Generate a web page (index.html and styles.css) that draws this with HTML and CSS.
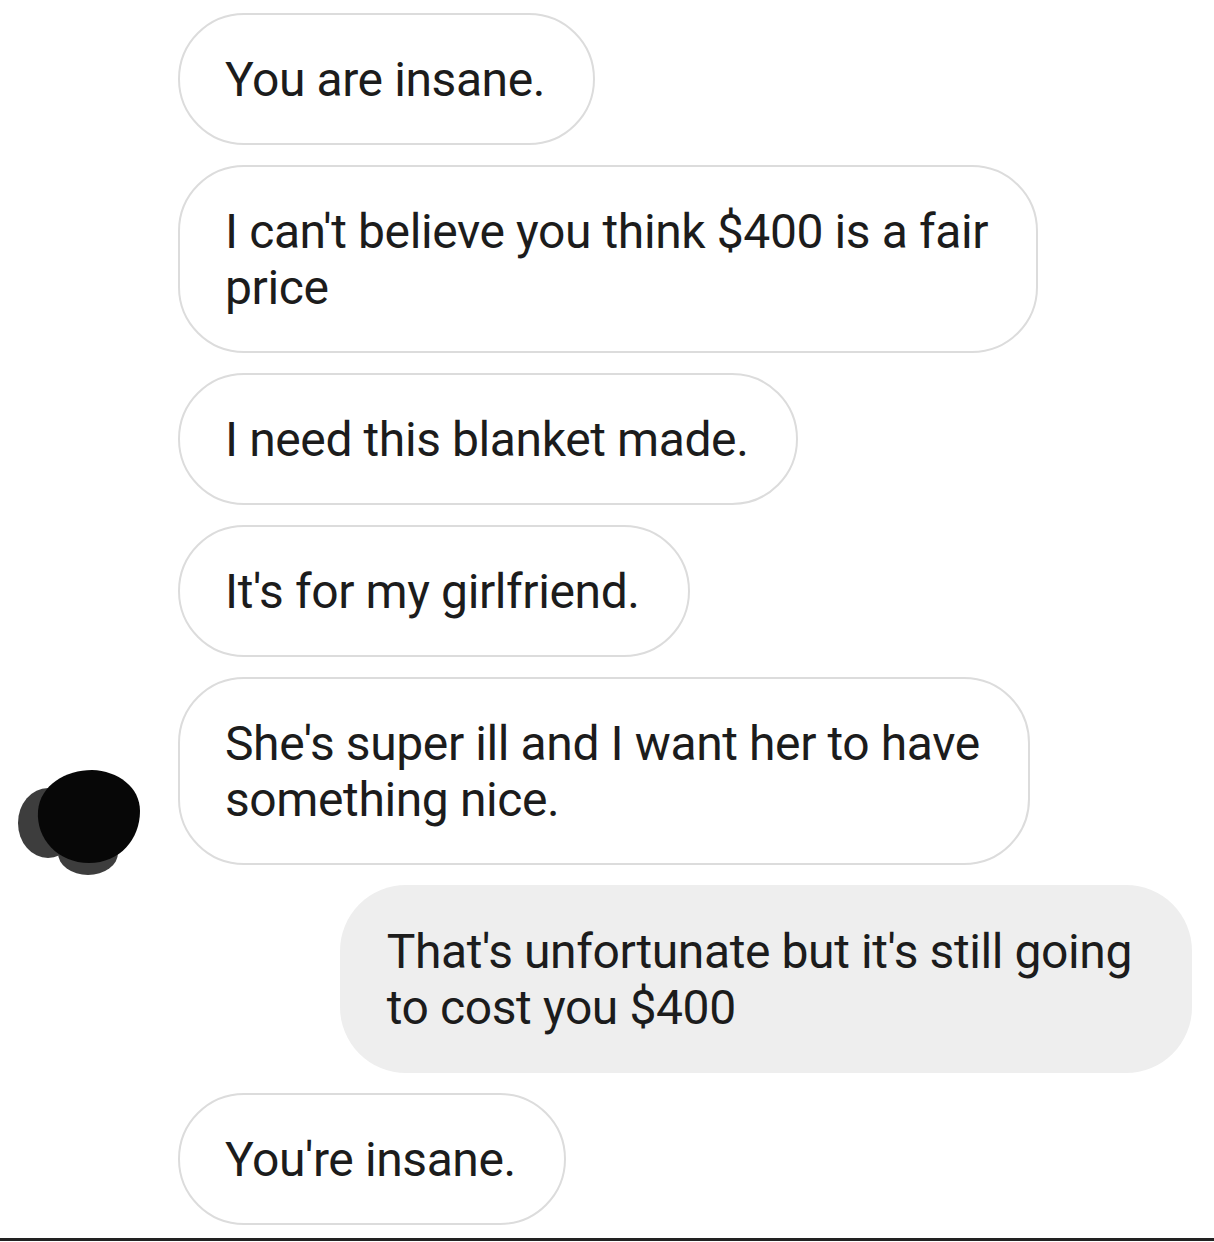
FILE: index.html
```html
<!DOCTYPE html>
<html lang="en">

<head>
    <meta charset="UTF-8">
    <meta name="viewport" content="width=device-width, initial-scale=1.0">
    <title>Chat</title>
    <link rel="stylesheet" href="styles.css">
</head>

<body>
    <div class="chat">
        <!-- Pesan dari pembeli -->
        <div class="row">
            <div class="avatar-col"></div>
            <div class="bubble">You are insane.</div>
        </div>
        <div class="row">
            <div class="avatar-col"></div>
            <div class="bubble">I can't believe you think $400 is a fair<br>price</div>
        </div>
        <div class="row">
            <div class="avatar-col"></div>
            <div class="bubble">I need this blanket made.</div>
        </div>
        <div class="row">
            <div class="avatar-col"></div>
            <div class="bubble">It's for my girlfriend.</div>
        </div>
        <div class="row">
            <div class="avatar-col">
                <!-- Foto profil yang disensor -->
                <svg class="avatar" width="136" height="115" viewBox="0 0 136 115">
                    <ellipse cx="34" cy="60" rx="30" ry="35" fill="#3d3d3d" />
                    <ellipse cx="74" cy="90" rx="30" ry="22" fill="#3d3d3d" />
                    <path d="M24 48 C26 22 52 7 78 7 C104 8 126 24 126 48 C126 76 106 100 75 100 C44 100 22 76 24 48 Z" fill="#070707" />
                </svg>
            </div>
            <div class="bubble">She's super ill and I want her to have<br>something nice.</div>
        </div>

        <!-- Balasan dari penjual -->
        <div class="row mine">
            <div class="bubble">That's unfortunate but it's still going<br>to cost you $400</div>
        </div>

        <div class="row">
            <div class="avatar-col"></div>
            <div class="bubble">You're insane.</div>
        </div>
    </div>
</body>

</html>
```

FILE: styles.css
```css
body {
    margin: 0;
    background-color: white;
    font-family: Roboto, "Liberation Sans", Arial, sans-serif;
}

.chat {
    display: flex;
    flex-direction: column;
    gap: 20px;
    padding: 13px 22px 13px 0;
    border-bottom: 3px solid #222;
}

.row {
    display: flex;
    align-items: flex-end;
}

.row.mine {
    justify-content: flex-end;
}

.avatar-col {
    width: 178px;
    flex-shrink: 0;
    padding-left: 14px;
    box-sizing: border-box;
}

.avatar {
    display: block;
    margin-bottom: -13px;
}

.bubble {
    border: 2px solid #dcdcdc;
    border-radius: 66px;
    padding: 37px 48px 35px 45px;
    font-size: 48px;
    line-height: 56px;
    letter-spacing: -0.4px;
    color: #1c1c1c;
    white-space: nowrap;
}

.mine .bubble {
    border: none;
    background-color: #eeeeee;
    padding: 39px 60px 37px 47px;
}
```
